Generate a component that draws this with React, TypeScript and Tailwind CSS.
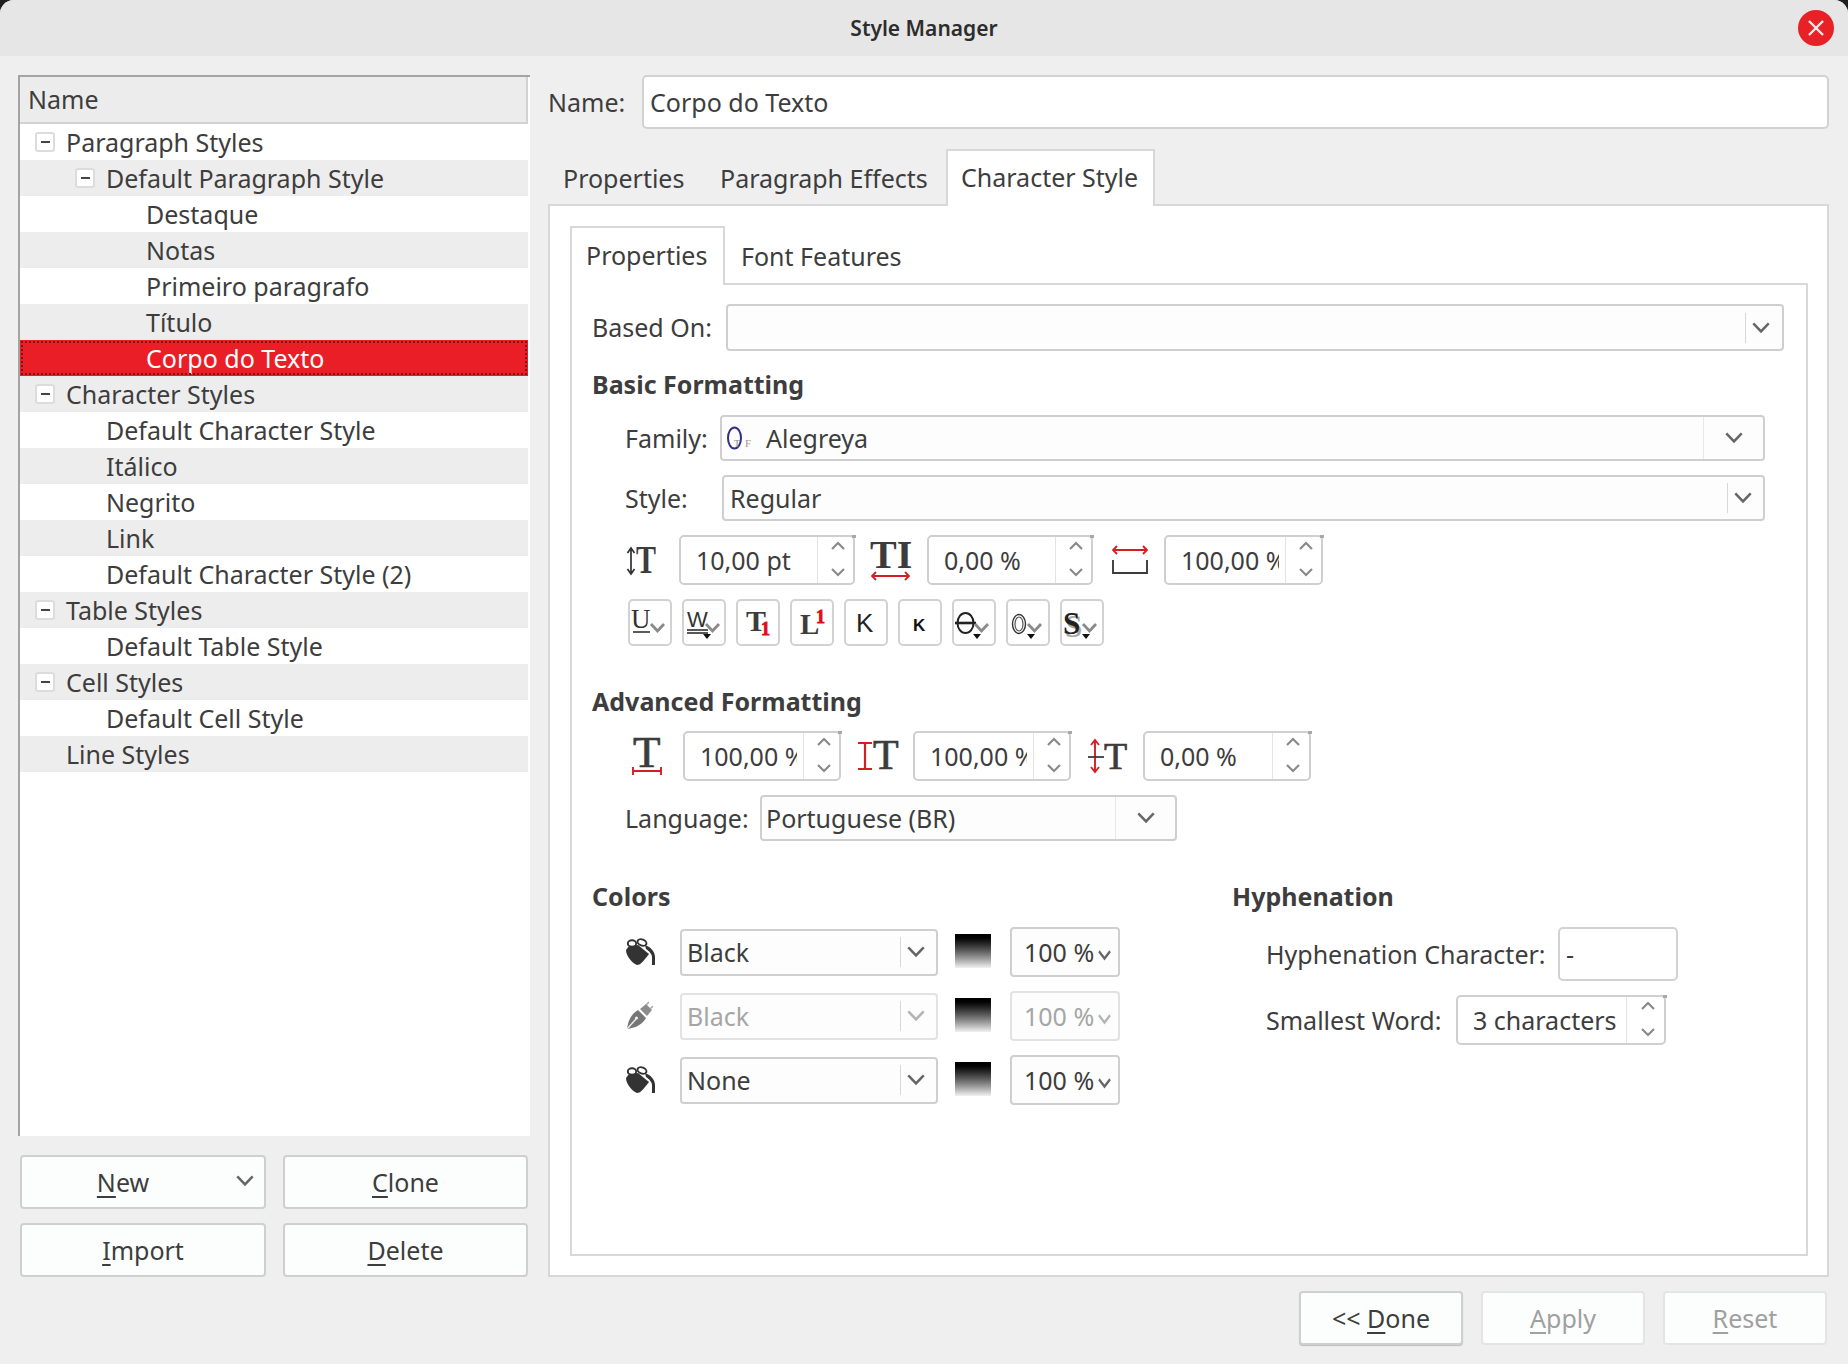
import type { ReactNode } from "react";

const TREE_ROWS = [
  { label: "Paragraph Styles", level: 0, toggle: true },
  { label: "Default Paragraph Style", level: 1, toggle: true },
  { label: "Destaque", level: 2 },
  { label: "Notas", level: 2 },
  { label: "Primeiro paragrafo", level: 2 },
  { label: "Título", level: 2 },
  { label: "Corpo do Texto", level: 2, selected: true },
  { label: "Character Styles", level: 0, toggle: true },
  { label: "Default Character Style", level: 1 },
  { label: "Itálico", level: 1 },
  { label: "Negrito", level: 1 },
  { label: "Link", level: 1 },
  { label: "Default Character Style (2)", level: 1 },
  { label: "Table Styles", level: 0, toggle: true },
  { label: "Default Table Style", level: 1 },
  { label: "Cell Styles", level: 0, toggle: true },
  { label: "Default Cell Style", level: 1 },
  { label: "Line Styles", level: 0 },
];

function Chevron({ up = false, size = "md", light = false }: { up?: boolean; size?: "sm" | "spin" | "md"; light?: boolean }) {
  const w = size === "md" ? 18 : size === "spin" ? 14 : 13;
  const h = size === "md" ? 12 : size === "spin" ? 9 : 11;
  return (
    <svg width={w} height={h} viewBox="0 0 14 9" preserveAspectRatio="none" fill="none" className="shrink-0">
      <polyline
        points={up ? "1,8 7,2 13,8" : "1,1 7,7 13,1"}
        stroke={light ? "#b4b4b4" : size === "spin" ? "#8a8a8a" : "#666666"}
        strokeWidth={size === "md" ? 2 : 2.2}
      />
    </svg>
  );
}

function Combo({
  className,
  children,
  arrowClass,
  disabled = false,
  arrowInset = false,
}: {
  className: string;
  children?: ReactNode;
  arrowClass: string;
  disabled?: boolean;
  arrowInset?: boolean;
}) {
  return (
    <div
      className={`${className} flex items-center shrink-0 rounded-[4px] border-2 bg-[#fcfdfc] ${
        disabled ? "border-[#e2e2e2] text-[#a6a6a6]" : "border-[#cfcfcf]"
      }`}
    >
      <div className="flex-1 min-w-0 flex items-center whitespace-nowrap overflow-hidden">{children}</div>
      <div
        className={`${arrowClass} flex items-center justify-center shrink-0 border-l ${
          arrowInset ? "h-[30px] pr-[6px] border-[#d8d8d8]" : "h-full border-[#e8e8e8]"
        }`}
      >
        <Chevron light={disabled} />
      </div>
    </div>
  );
}

function Spin({ className, value, arrowClass = "w-[36px]" }: { className: string; value: string; arrowClass?: string }) {
  return (
    <div className={`${className} relative flex shrink-0 h-[50px] rounded-[5px] border-2 border-[#cfcfcf] bg-white`}>
      <div className="flex-1 min-w-0 pl-[15px] pr-[6px] flex items-center overflow-hidden whitespace-nowrap">
        <span className="overflow-hidden">{value}</span>
      </div>
      <div className={`${arrowClass} shrink-0 border-l border-[#e4e4e4] flex flex-col items-center justify-between pl-[4px] pt-[4px] pb-[6px]`}>
        <Chevron up size="spin" />
        <Chevron size="spin" />
      </div>
      <span className="absolute -top-[2px] -right-[3px] w-[4px] h-[3px] bg-[#a8a8a8]" />
    </div>
  );
}

function Percent({ value, disabled = false }: { value: string; disabled?: boolean }) {
  return (
    <div
      className={`ml-[19px] w-[110px] h-[50px] flex items-center shrink-0 rounded-[4px] border-2 bg-[#fcfdfc] pl-[12px] ${
        disabled ? "border-[#e2e2e2] text-[#a6a6a6]" : "border-[#cfcfcf]"
      }`}
    >
      <span className="w-[74px] whitespace-nowrap">{value}</span>
      <span className="mt-[6px]">
        <Chevron size="sm" light={disabled} />
      </span>
    </div>
  );
}

function PaintBucket() {
  return (
    <svg width="30" height="30" viewBox="0 0 30 30" className="shrink-0">
      <path d="M1 13C1 19 7 26 12 28c3 0 6-3 12-11L13 8 4 9z" fill="#333333" />
      <ellipse cx="7" cy="6.5" rx="4.2" ry="3.2" fill="#ffffff" stroke="#333333" strokeWidth="1.9" />
      <ellipse cx="17" cy="5.5" rx="4.6" ry="3" fill="#ffffff" stroke="#333333" strokeWidth="1.9" transform="rotate(20 17 5.5)" />
      <path d="M20 8c6 2 10 7 10 12v8h-3v-8c0-3-3-6-6-8z" fill="#333333" />
    </svg>
  );
}

function PenNib() {
  return (
    <svg width="30" height="30" viewBox="0 0 30 30" className="shrink-0">
      <path d="M2 28C3 20 6 13 13 9l8 8c-4 7-11 10-19 11z" fill="#767676" />
      <path d="M2 28l9-10" stroke="#ededed" strokeWidth="1.4" />
      <circle cx="11.5" cy="17" r="1.6" fill="#ededed" />
      <path d="M15 8l7 7 5-6-6-6z" fill="#8c8c8c" />
      <path d="M21 4l3-3M25 8l3-3" stroke="#a8a8a8" strokeWidth="1.5" />
    </svg>
  );
}

function Swatch() {
  return <div className="ml-[17px] w-[36px] h-[34px] shrink-0 -mt-[2px] bg-linear-to-b from-black to-[#f2f2f2]" />;
}

function SerifIcon({ className, width, children }: { className: string; width: number; children: ReactNode }) {
  return (
    <svg
      width={width}
      height={44}
      viewBox={`0 0 ${width} 44`}
      className={`${className} shrink-0`}
      fontFamily="'Liberation Serif', serif"
      fontWeight="700"
    >
      {children}
    </svg>
  );
}

function ToolButton({ children }: { children: ReactNode }) {
  return (
    <div className="w-[44px] h-[47px] shrink-0 rounded-[5px] border-2 border-[#d2d2d2] bg-white">
      <svg width="40" height="43" viewBox="0 0 40 43">
        {children}
      </svg>
    </div>
  );
}

const Small = ({ x = 20 }: { x?: number }) => (
  <polyline points={`${x},23 ${x + 6.5},30 ${x + 13},23`} fill="none" stroke="#8a8a8a" strokeWidth="2.8" />
);
const Drop = ({ x = 20 }: { x?: number }) => <polygon points={`${x},33 ${x + 8},33 ${x + 4},38`} fill="#111111" />;

function Mnemonic({ first, rest }: { first: string; rest: string }) {
  return (
    <>
      <span className="underline decoration-2 underline-offset-[4px]">{first}</span>
      {rest}
    </>
  );
}

function PushButton({ className, children, disabled = false }: { className: string; children: ReactNode; disabled?: boolean }) {
  return (
    <div
      className={`${className} h-[54px] shrink-0 flex items-center justify-center rounded-[4px] border-2 bg-[#fcfdfd] ${
        disabled ? "border-[#e4e4e4] text-[#a0a0a0]" : "border-[#cfcfcf]"
      }`}
    >
      {children}
    </div>
  );
}

export default function App() {
  return (
    <div className="w-[1848px] h-[1364px] bg-[#1f1f1f] text-[25px] leading-[1.3] text-[#3d3d3d] font-['Noto_Sans',sans-serif] overflow-hidden">
      <div className="h-full flex flex-col rounded-t-[14px] overflow-hidden bg-[#efefef]">
        <div className="h-[56px] shrink-0 bg-[#e6e6e6] grid grid-cols-[1fr_auto_1fr] items-center">
          <div />
          <div className="font-semibold text-[21px] text-[#2d2d2d] pt-[2px]">Style Manager</div>
          <div className="flex justify-end pr-[14px]">
            <div className="w-[36px] h-[36px] rounded-full bg-[#e82127] flex items-center justify-center">
              <svg width="18" height="18" viewBox="0 0 18 18">
                <path d="M2 2l14 14M16 2L2 16" stroke="#fbeaea" strokeWidth="2.4" />
              </svg>
            </div>
          </div>
        </div>

        <div className="flex-1 flex pl-[18px] pt-[19px]">
          {/* style tree and its buttons */}
          <div className="w-[512px] shrink-0 flex flex-col">
            <div className="h-[1061px] bg-white border-l-2 border-t-2 border-[#a4a4a4] pr-[2px] flex flex-col">
              <div className="h-[47px] shrink-0 bg-[#ececec] border-b-2 border-r-2 border-[#d2d2d2] flex items-center pl-[8px]">Name</div>
              {TREE_ROWS.map((row, i) => (
                <div
                  key={row.label + i}
                  className={`h-[36px] shrink-0 flex items-center ${
                    row.selected
                      ? "bg-[#ea1e26] text-white outline-dotted outline-2 -outline-offset-3 outline-[#7d1015]"
                      : i % 2 === 1
                        ? "bg-[#ededed]"
                        : "bg-white"
                  } ${row.level === 0 ? "pl-[46px]" : row.level === 1 ? "pl-[86px]" : "pl-[126px]"} relative`}
                >
                  {row.toggle && (
                    <span
                      className={`absolute ${row.level === 0 ? "left-[15px]" : "left-[55px]"} top-[8px] w-[20px] h-[20px] flex items-center justify-center rounded-[3px] border-2 border-[#dcdcdc] bg-white`}
                    >
                      <span className="w-[9px] h-[2px] bg-[#444444]" />
                    </span>
                  )}
                  {row.label}
                </div>
              ))}
            </div>
            <div className="mt-[19px] flex pl-[2px] gap-[17px]">
              <PushButton className="w-[246px] relative pr-[40px]">
                <span>
                  <Mnemonic first="N" rest="ew" />
                </span>
                <span className="absolute right-[10px] top-[18px]">
                  <Chevron />
                </span>
              </PushButton>
              <PushButton className="w-[245px]">
                <span>
                  <Mnemonic first="C" rest="lone" />
                </span>
              </PushButton>
            </div>
            <div className="mt-[14px] flex pl-[2px] gap-[17px]">
              <PushButton className="w-[246px]">
                <span>
                  <Mnemonic first="I" rest="mport" />
                </span>
              </PushButton>
              <PushButton className="w-[245px]">
                <span>
                  <Mnemonic first="D" rest="elete" />
                </span>
              </PushButton>
            </div>
          </div>

          {/* right side */}
          <div className="ml-[18px] w-[1281px] shrink-0 flex flex-col">
            <div className="h-[54px] flex items-center">
              <span className="w-[94px]">Name:</span>
              <div className="w-[1187px] h-full flex items-center rounded-[5px] border-2 border-[#d2d2d2] bg-white pl-[6px]">Corpo do Texto</div>
            </div>

            <div className="mt-[20px] h-[55px] flex relative z-10">
              <div className="w-[157px] pl-[15px] pt-[13px]">Properties</div>
              <div className="w-[241px] pl-[15px] pt-[13px]">Paragraph Effects</div>
              <div className="w-[209px] h-[57px] pl-[13px] pt-[10px] bg-white border-2 border-b-0 border-[#d8d8d8]">Character Style</div>
            </div>

            <div className="h-[1073px] border-2 border-[#d8d8d8] bg-white pl-[20px] pr-[19px] pt-[20px]">
              <div className="h-[57px] flex relative z-10">
                <div className="w-[155px] h-[59px] pl-[14px] pt-[11px] bg-white border-2 border-b-0 border-[#d8d8d8]">Properties</div>
                <div className="pl-[16px] pt-[14px]">Font Features</div>
              </div>
              <div className="h-[973px] border-2 border-[#d8d8d8] pl-[20px] pt-[19px] flex flex-col">
                <div className="h-[47px] flex items-center">
                  <span className="w-[134px]">Based On:</span>
                  <Combo className="w-[1058px] h-full" arrowClass="w-[37px]" arrowInset />
                </div>

                <div className="mt-[18px] h-[30px] flex items-center font-bold">Basic Formatting</div>

                <div className="mt-[16px] h-[46px] flex items-center pl-[33px]">
                  <span className="w-[95px]">Family:</span>
                  <Combo className="w-[1045px] h-full" arrowClass="w-[60px]">
                    <svg width="28" height="30" viewBox="0 0 28 30" className="ml-[5px] shrink-0">
                      <ellipse cx="7.5" cy="15" rx="6.5" ry="10.5" fill="none" stroke="#2f2f8a" strokeWidth="2" />
                      <text x="7" y="24" fontSize="10" fill="#8a8a8a" fontFamily="'Liberation Serif', serif">
                        T
                      </text>
                      <text x="18" y="24" fontSize="11" fill="#a89a8a" fontFamily="'Liberation Serif', serif">
                        F
                      </text>
                    </svg>
                    <span className="ml-[11px]">Alegreya</span>
                  </Combo>
                </div>

                <div className="mt-[14px] h-[46px] flex items-center pl-[33px]">
                  <span className="w-[97px]">Style:</span>
                  <Combo className="w-[1043px] h-full" arrowClass="w-[36px]" arrowInset>
                    <span className="pl-[6px]">Regular</span>
                  </Combo>
                </div>

                <div className="mt-[14px] h-[50px] flex items-center">
                  <SerifIcon className="ml-[34px]" width={30}>
                    <path d="M5 11v24M1.5 15L5 10l3.5 5M1.5 31L5 36l3.5-5" stroke="#333333" strokeWidth="1.7" fill="none" />
                    <text transform="translate(10 35) scale(1 1.3)" fontSize="30" fill="#3c3c3c">
                      T
                    </text>
                  </SerifIcon>
                  <Spin className="ml-[23px] w-[176px]" value="10,00 pt" />
                  <SerifIcon className="ml-[15px]" width={42}>
                    <text x="0" y="30" fontSize="40" fill="#3c3c3c">
                      TI
                    </text>
                    <path d="M2 38h37M6 34l-4 4 4 4M35 34l4 4-4 4" stroke="#d21f25" strokeWidth="1.8" fill="none" />
                  </SerifIcon>
                  <Spin className="ml-[15px] w-[166px]" value="0,00 %" />
                  <svg width="36" height="34" viewBox="0 0 36 34" className="ml-[19px] shrink-0">
                    <path d="M1 7h34M5 3L1 7l4 4M31 3l4 4-4 4" stroke="#d21f25" strokeWidth="1.9" fill="none" />
                    <path d="M1 17v13h34V17" stroke="#3c3c3c" strokeWidth="1.9" fill="none" />
                  </svg>
                  <Spin className="ml-[16px] w-[159px]" value="100,00 %" />
                </div>

                <div className="mt-[14px] flex gap-[10px] pl-[36px]">
                  <ToolButton>
                    <text x="1" y="27" fontSize="27" fill="#333333" fontFamily="'Liberation Serif', serif">
                      U
                    </text>
                    <path d="M3 31h17" stroke="#333333" strokeWidth="1.6" />
                    <Small x={21} />
                  </ToolButton>
                  <ToolButton>
                    <text x="3" y="26" fontSize="22" fill="#333333" fontFamily="'Liberation Sans', sans-serif">
                      W
                    </text>
                    <path d="M3 29h21M3 32h21" stroke="#222222" strokeWidth="1.6" />
                    <Small x={22} />
                    <Drop x={19} />
                  </ToolButton>
                  <ToolButton>
                    <text x="8" y="30" fontSize="30" fontWeight="700" fill="#3c3c3c" fontFamily="'Liberation Serif', serif">
                      T
                    </text>
                    <text x="23" y="34" fontSize="18" fontWeight="700" fill="#e00b12" stroke="#e00b12" strokeWidth="0.8" fontFamily="'Liberation Serif', serif">
                      1
                    </text>
                  </ToolButton>
                  <ToolButton>
                    <text x="8" y="33" fontSize="29" fontWeight="700" fill="#3c3c3c" fontFamily="'Liberation Serif', serif">
                      L
                    </text>
                    <text x="24" y="22" fontSize="18" fontWeight="700" fill="#e00b12" stroke="#e00b12" strokeWidth="0.8" fontFamily="'Liberation Serif', serif">
                      1
                    </text>
                  </ToolButton>
                  <ToolButton>
                    <text x="10" y="31" fontSize="26" fill="#222222" fontFamily="'Liberation Sans', sans-serif">
                      K
                    </text>
                  </ToolButton>
                  <ToolButton>
                    <text x="13" y="30" fontSize="17" fontWeight="700" fill="#111111" fontFamily="'Liberation Sans', sans-serif">
                      K
                    </text>
                  </ToolButton>
                  <ToolButton>
                    <ellipse cx="11.5" cy="22" rx="8" ry="10" fill="none" stroke="#222222" strokeWidth="2" />
                    <path d="M1 22h21" stroke="#222222" strokeWidth="2.6" />
                    <Small x={21} />
                    <Drop x={19} />
                  </ToolButton>
                  <ToolButton>
                    <ellipse cx="11" cy="23" rx="6.5" ry="9.5" fill="none" stroke="#333333" strokeWidth="1.4" />
                    <ellipse cx="11" cy="23" rx="4" ry="7" fill="none" stroke="#555555" strokeWidth="1.2" />
                    <Small x={20} />
                    <Drop x={19} />
                  </ToolButton>
                  <ToolButton>
                    <text x="3" y="36" fontSize="31" fontWeight="700" fill="#a8a8a8" fontFamily="'Liberation Serif', serif">
                      S
                    </text>
                    <text x="1" y="33" fontSize="31" fontWeight="700" fill="#222222" fontFamily="'Liberation Serif', serif">
                      S
                    </text>
                    <Small x={21} />
                    <Drop x={20} />
                  </ToolButton>
                </div>

                <div className="mt-[40px] h-[30px] flex items-center font-bold">Advanced Formatting</div>

                <div className="mt-[15px] h-[50px] flex items-center">
                  <SerifIcon className="ml-[40px]" width={30}>
                    <text x="1" y="33" fontSize="45" fontWeight="400" fill="#3c3c3c" stroke="#3c3c3c" strokeWidth="0.7">
                      T
                    </text>
                    <path d="M1 33v8M29 33v8M1 37h28" stroke="#d21f25" strokeWidth="1.9" fill="none" />
                  </SerifIcon>
                  <Spin className="ml-[21px] w-[158px]" value="100,00 %" />
                  <SerifIcon className="ml-[17px]" width={42}>
                    <path d="M0 9h14M0 35h14M7 9v26" stroke="#d21f25" strokeWidth="2.2" fill="none" />
                    <text x="15" y="35" fontSize="42" fontWeight="400" fill="#3c3c3c" stroke="#3c3c3c" strokeWidth="0.7">
                      T
                    </text>
                  </SerifIcon>
                  <Spin className="ml-[13px] w-[158px]" value="100,00 %" />
                  <SerifIcon className="ml-[17px]" width={40}>
                    <path d="M7 6v32M3 11l4-5 4 5M3 33l4 5 4-5" stroke="#d21f25" strokeWidth="1.9" fill="none" />
                    <path d="M0 23h16" stroke="#3c3c3c" strokeWidth="1.8" />
                    <text x="16" y="35" fontSize="38" fontWeight="400" fill="#3c3c3c" stroke="#3c3c3c" strokeWidth="0.7">
                      T
                    </text>
                  </SerifIcon>
                  <Spin className="ml-[15px] w-[168px]" value="0,00 %" arrowClass="w-[37px]" />
                </div>

                <div className="mt-[14px] h-[46px] flex items-center pl-[33px]">
                  <span className="w-[135px]">Language:</span>
                  <Combo className="w-[417px] h-full" arrowClass="w-[60px]">
                    <span className="pl-[4px]">Portuguese (BR)</span>
                  </Combo>
                </div>

                <div className="mt-[40px] flex">
                  <div className="w-[640px] shrink-0">
                    <div className="h-[30px] flex items-center font-bold">Colors</div>
                    {[
                      { label: "Black", icon: <PaintBucket />, disabled: false, top: "mt-[16px]" },
                      { label: "Black", icon: <PenNib />, disabled: true, top: "mt-[14px]" },
                      { label: "None", icon: <PaintBucket />, disabled: false, top: "mt-[14px]" },
                    ].map((row, i) => (
                      <div key={i} className={`${row.top} h-[50px] flex items-center pl-[33px]`}>
                        <span className="w-[55px] flex">{row.icon}</span>
                        <Combo className="w-[258px] h-[47px]" arrowClass="w-[36px]" arrowInset disabled={row.disabled}>
                          <span className="pl-[5px]">{row.label}</span>
                        </Combo>
                        <Swatch />
                        <Percent value="100 %" disabled={row.disabled} />
                      </div>
                    ))}
                  </div>
                  <div className="flex-1">
                    <div className="h-[30px] flex items-center font-bold">Hyphenation</div>
                    <div className="mt-[16px] h-[54px] flex items-center pl-[34px]">
                      <span className="w-[292px] whitespace-nowrap">Hyphenation Character:</span>
                      <div className="w-[120px] h-full flex items-center rounded-[5px] border-2 border-[#d2d2d2] bg-white pl-[6px]">-</div>
                    </div>
                    <div className="mt-[14px] h-[50px] flex items-center pl-[34px]">
                      <span className="w-[190px] whitespace-nowrap">Smallest Word:</span>
                      <Spin className="w-[210px]" value="3 characters" arrowClass="w-[38px]" />
                    </div>
                  </div>
                </div>
              </div>
            </div>

            <div className="mt-[14px] flex justify-end gap-[18px] pr-[2px]">
              <PushButton className="w-[164px] shadow-[0_1px_1px_#bdbdbd]">
                <span>
                  {"<< "}
                  <Mnemonic first="D" rest="one" />
                </span>
              </PushButton>
              <PushButton className="w-[164px]" disabled>
                <span>
                  <Mnemonic first="A" rest="pply" />
                </span>
              </PushButton>
              <PushButton className="w-[164px]" disabled>
                <span>
                  <Mnemonic first="R" rest="eset" />
                </span>
              </PushButton>
            </div>
          </div>
        </div>
      </div>
    </div>
  );
}
